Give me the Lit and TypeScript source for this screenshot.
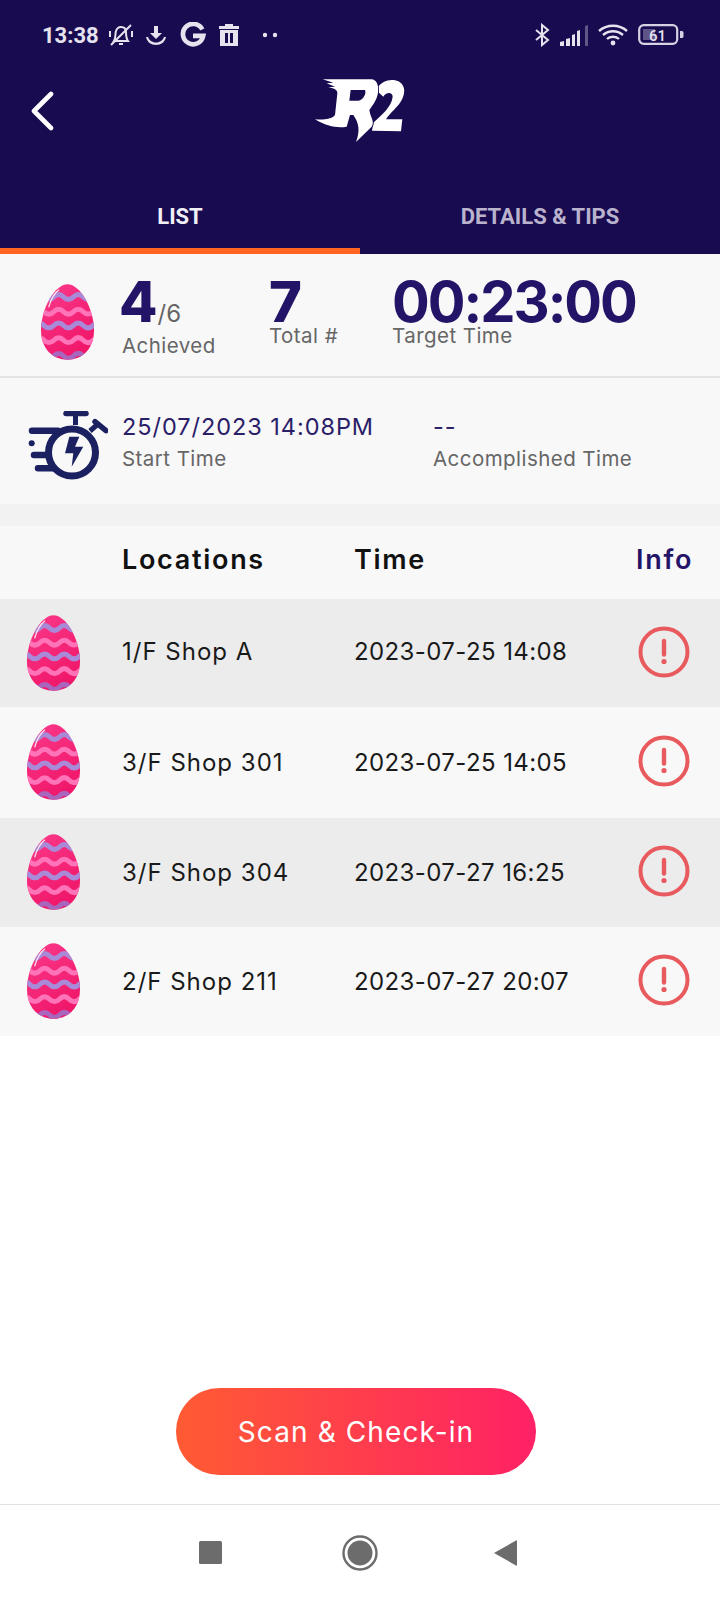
import { LitElement, css, html, svg } from "lit";
import { customElement } from "lit/decorators.js";

const rows = [
  { place: "1/F Shop A", time: "2023-07-25 14:08" },
  { place: "3/F Shop 301", time: "2023-07-25 14:05" },
  { place: "3/F Shop 304", time: "2023-07-27 16:25" },
  { place: "2/F Shop 211", time: "2023-07-27 20:07" },
];

const wave = (y: number, color: string, width = 5) => {
  let d = `M-6 ${y}`;
  for (let x = -6; x < 60; x += 20) {
    d += ` q5 -5 10 0 t10 0`;
  }
  return svg`<path d=${d} fill="none" stroke=${color} stroke-width=${width}/>`;
};

let eggId = 0;
const egg = () => {
  const id = `egg-${eggId++}`;
  const shape = "M28 1C41 1 55 26 55 48C55 67 43 78 28 78C13 78 1 67 1 48C1 26 15 1 28 1Z";
  return html`<svg class="egg" viewBox="0 0 56 79">
    <defs>
      <clipPath id=${id}><path d=${shape} /></clipPath>
      <linearGradient id="${id}-g" x1="0" y1="0" x2="0.5" y2="1">
        <stop offset="0" stop-color="#fb3a8a" />
        <stop offset="1" stop-color="#f0176a" />
      </linearGradient>
    </defs>
    <path d=${shape} fill="url(#${id}-g)" />
    <g clip-path="url(#${id})">
      ${wave(14, "#a88ad8")}${wave(29, "#ff74b8")}${wave(43, "#a88ad8")}${wave(58, "#ff74b8")}${wave(74, "#a866bc")}
    </g>
    <path d="M19 7C14 11 11 17 9 24" fill="none" stroke="#ffe0ee" stroke-width="1.3" stroke-linecap="round" />
  </svg>`;
};

const warn = html`<svg class="warn" viewBox="0 0 52 52">
  <circle cx="26" cy="26" r="23.5" fill="none" stroke="#e95a5e" stroke-width="4" />
  <path d="M26 15V28.5" stroke="#e95a5e" stroke-width="4.4" stroke-linecap="round" />
  <circle cx="26" cy="35.5" r="2.6" fill="#e95a5e" />
</svg>`;

@customElement("app-root")
export class AppRoot extends LitElement {
  static styles = css`
    :host {
      display: block;
      width: 720px;
      height: 1600px;
      background: #fff;
      font-family: Inter, "Liberation Sans", sans-serif;
      position: relative;
      overflow: hidden;
    }
    .header {
      background: #190b50;
      height: 254px;
      display: flex;
      flex-direction: column;
      color: #fff;
    }
    .status {
      height: 70px;
      padding: 0 36px 0 42px;
      display: flex;
      align-items: center;
      justify-content: space-between;
      color: #e6e3ef;
    }
    .status-left,
    .status-right {
      display: flex;
      align-items: center;
    }
    .clock {
      font: 700 22px Roboto, sans-serif;
      margin-right: 9px;
    }
    .status svg {
      display: block;
    }
    .toolbar {
      height: 74px;
      padding-left: 30px;
      display: flex;
      align-items: flex-start;
      position: relative;
    }
    .back {
      margin-top: 21px;
    }
    .logo {
      position: absolute;
      left: 300px;
      top: -10px;
    }
    .tabs {
      margin-top: auto;
      display: flex;
      height: 74px;
    }
    .tab {
      flex: 1;
      display: flex;
      align-items: center;
      justify-content: center;
      padding-top: 5px;
      box-sizing: border-box;
      border-bottom: 6px solid transparent;
      font: 700 22px Roboto, sans-serif;
      color: #b9b3cd;
    }
    .tab.on {
      color: #f2f0f7;
      border-bottom-color: #ff6622;
    }
    .summary {
      height: 124px;
      background: #f8f8f8;
      border-bottom: 2px solid #e4e4e4;
      box-sizing: border-box;
      display: flex;
      position: relative;
    }
    .summary .egg {
      width: 55px;
      height: 78px;
      margin: 29px 0 0 40px;
    }
    .stat {
      position: absolute;
      top: 0;
    }
    .big {
      font-size: 56px;
      font-weight: 800;
      color: #241468;
      line-height: 46px;
      margin-top: 25px;
      white-space: nowrap;
    }
    .big.clockface {
      font-weight: 700;
      letter-spacing: -2px;
    }
    .big small {
      font-size: 24px;
      font-weight: 400;
      color: #666;
      line-height: 0;
    }
    .sub {
      font-size: 20.5px;
      font-weight: 400;
      color: #666;
      white-space: nowrap;
      letter-spacing: 0.45px;
    }
    .stat .sub {
      margin-top: -2px;
    }
    .stat .sub.low {
      margin: 8px 0 0 3px;
    }
    .times {
      height: 126px;
      background: #f8f8f8;
      display: flex;
      align-items: flex-start;
      position: relative;
    }
    .times .clockicon {
      margin: 33px 0 0 28px;
    }
    .time-col {
      position: absolute;
      top: 34px;
    }
    .time-col .value {
      font-size: 23.5px;
      color: #2a2068;
      letter-spacing: 0.95px;
      white-space: nowrap;
    }
    .time-col .sub {
      margin-top: 5px;
    }
    .gap {
      height: 22px;
      background: #f2f2f2;
    }
    .table-head,
    .row {
      display: grid;
      grid-template-columns: 122px 232px 1fr 104px;
      align-items: center;
    }
    .table-head {
      height: 73px;
      box-sizing: border-box;
      padding-bottom: 7px;
      background: #f8f8f8;
      font-size: 27px;
      font-weight: 600;
      color: #111;
      letter-spacing: 1.7px;
    }
    .table-head .info {
      color: #241468;
      padding-left: 20px;
    }
    .row {
      height: 109px;
      background: #f8f8f8;
      font-size: 24px;
      color: #1a1a1a;
      letter-spacing: 0.4px;
    }
    .row:nth-child(odd) {
      background: #ececec;
    }
    .row:first-child {
      height: 108px;
    }
    .row:first-child span {
      margin-bottom: 4px;
    }
    .row:nth-child(2) {
      height: 111px;
    }
    .row .place {
      letter-spacing: 1px;
    }
    .row .egg {
      width: 55px;
      height: 78px;
      margin: 0 0 1px 26px;
    }
    .warn {
      width: 52px;
      height: 52px;
      margin: 0 0 3px 22px;
    }
    .scan {
      position: absolute;
      left: 176px;
      top: 1388px;
      width: 360px;
      height: 87px;
      border-radius: 44px;
      background: linear-gradient(90deg, #ff5b33, #ff2165);
      color: #fff;
      font-size: 28px;
      letter-spacing: 1.1px;
      display: flex;
      align-items: center;
      justify-content: center;
    }
    .nav {
      position: absolute;
      left: 0;
      right: 0;
      top: 1504px;
      height: 96px;
      box-sizing: border-box;
      padding-right: 4px;
      border-top: 1px solid #e2e2e2;
      display: flex;
      align-items: center;
      justify-content: center;
      gap: 118px;
    }
    .nav svg {
      display: block;
    }
    .nav .home {
      margin: 0 -2px 0 2px;
    }
  `;

  render() {
    return html`
      <div class="header">
        <div class="status">
          <div class="status-left">
            <span class="clock">13:38</span>
            <svg width="26" height="26" viewBox="0 0 26 26" fill="none" stroke="#e6e3ef" stroke-width="2" style="margin-right:10px">
              <path d="M6 19C8 16 7 12 8 9C9 6 11 5 13 5C16 5 18 7 18 10C18 13 18 16 20 19Z" />
              <path d="M11 22H15M3 23L23 3M2 9V15M24 9V15" />
            </svg>
            <svg width="24" height="24" viewBox="0 0 24 24" fill="#e6e3ef" style="margin-right:12px">
              <path d="M10 3H14V10H18L12 16L6 10H10Z" />
              <path d="M2 14C3 19 7 22 12 22C17 22 21 19 22 14H20C19 17 16 19.5 12 19.5C8 19.5 5 17 4 14Z" />
            </svg>
            <svg width="26" height="26" viewBox="0 0 28 28" fill="none" stroke="#e6e3ef" stroke-width="5" style="margin-right:12px">
              <path d="M24 8A11 11 0 1 0 25 15H14" />
            </svg>
            <svg width="22" height="24" viewBox="0 0 22 24" fill="#e6e3ef" style="margin-right:22px">
              <path d="M7 1H15V3H21V6H1V3H7Z" />
              <path fill-rule="evenodd" d="M2 7H20V23H2ZM7 10V20H10V10ZM12 10V20H15V10Z" />
            </svg>
            <svg width="16" height="6" viewBox="0 0 16 6" fill="#e6e3ef">
              <circle cx="3" cy="3" r="2.2" /><circle cx="13" cy="3" r="2.2" />
            </svg>
          </div>
          <div class="status-right">
            <svg width="16" height="24" viewBox="0 0 16 24" fill="none" stroke="#e6e3ef" stroke-width="2" style="margin-right:10px">
              <path d="M2 7L14 17L8 22V2L14 7L2 17" />
            </svg>
            <svg width="28" height="21" viewBox="0 0 28 21" fill="#e6e3ef" style="margin-right:10px">
              <path d="M0 21V17L4 16V21ZM6 21V14L10 13V21ZM12 21V10L15 9V21ZM17 21V6L20 5V21Z" />
              <path d="M25 1L28 0V21H25Z" opacity=".35" />
            </svg>
            <svg width="30" height="22" viewBox="0 0 30 22" fill="none" stroke="#e6e3ef" stroke-width="2.4" style="margin-right:10px">
              <path d="M1 7C9 0 21 0 29 7M5 11C11 6 19 6 25 11M9 15C12 12 18 12 21 15" />
              <circle cx="15" cy="19" r="2.4" fill="#e6e3ef" stroke="none" />
            </svg>
            <svg width="46" height="22" viewBox="0 0 46 22">
              <rect x="1.2" y="1.2" width="38" height="18.6" rx="4.5" fill="none" stroke="#d6d2e4" stroke-width="2.2" />
              <rect x="5" y="5" width="12" height="11" fill="#5e5488" />
              <path d="M42 7H44C45 7 45.5 8 45.5 9V12C45.5 13 45 14 44 14H42Z" fill="#d6d2e4" />
              <text x="19.5" y="16.5" text-anchor="middle" font-family="Roboto" font-size="15" font-weight="500" fill="#e6e3ef">61</text>
            </svg>
          </div>
        </div>
        <div class="toolbar">
          <svg class="back" width="26" height="40" viewBox="0 0 26 40" fill="none" stroke="#fff" stroke-width="4.6" stroke-linecap="round" stroke-linejoin="round">
            <path d="M21 3L4 20L21 37" />
          </svg>
          <svg class="logo" width="120" height="90" viewBox="0 0 360 270" fill="#fff">
            <path d="M228 90C240 65 265 58 280 60C310 62 322 90 305 120C295 140 270 158 258 178L307 178L303 214L216 212L220 188C245 165 275 140 278 110C278 95 258 95 250 110Z" />
            <path
              fill-rule="evenodd"
              stroke="#190b50"
              stroke-width="5"
              paint-order="stroke"
              d="M68 58L215 58C240 60 240 105 222 130L208 150C212 175 225 185 215 200L168 246C180 215 178 190 160 165L150 165L140 200C115 205 80 200 45 178C70 180 95 178 105 165L112 100C112 90 105 85 85 82L105 80L80 70L100 68ZM152 90L195 90C200 100 190 120 175 122L148 122Z"
            />
          </svg>
        </div>
        <div class="tabs">
          <div class="tab on">LIST</div>
          <div class="tab">DETAILS &amp; TIPS</div>
        </div>
      </div>

      <div class="summary">
        ${egg()}
        <div class="stat" style="left:119px">
          <div class="big">4<small>/6</small></div>
          <div class="sub low">Achieved</div>
        </div>
        <div class="stat" style="left:269px">
          <div class="big">7</div>
          <div class="sub">Total #</div>
        </div>
        <div class="stat" style="left:392px">
          <div class="big clockface">00:23:00</div>
          <div class="sub">Target Time</div>
        </div>
      </div>

      <div class="times">
        <svg class="clockicon" width="80" height="70" viewBox="0 0 80 70">
          <g fill="none" stroke="#1b2061">
            <circle cx="44" cy="41.5" r="23.5" stroke-width="7" />
            <path d="M47.5 4V14M62 20L70 13" stroke-width="5" />
            <path d="M67 10.7L78 19.7" stroke-width="5.5" stroke-linecap="round" />
            <path d="M38 2.5H58" stroke-width="5.5" stroke-linecap="round" />
            <path d="M4 19.7H30M6 44H20M10 57.3H26" stroke-width="6.5" stroke-linecap="round" />
          </g>
          <circle cx="3.7" cy="32.3" r="3" fill="#1b2061" />
          <path d="M41.3 25.7H51.3L47 35.7H55.3L43.7 55.7L45.3 42.3H37Z" fill="#1b2061" />
        </svg>
        <div class="time-col" style="left:122px">
          <div class="value">25/07/2023 14:08PM</div>
          <div class="sub">Start Time</div>
        </div>
        <div class="time-col" style="left:433px">
          <div class="value">--</div>
          <div class="sub">Accomplished Time</div>
        </div>
      </div>

      <div class="gap"></div>

      <div class="table-head">
        <span></span><span>Locations</span><span>Time</span><span class="info">Info</span>
      </div>
      <div>
        ${rows.map(
          (r) => html`<div class="row">
            ${egg()}
            <span class="place">${r.place}</span>
            <span>${r.time}</span>
            ${warn}
          </div>`
        )}
      </div>

      <div class="scan">Scan &amp; Check-in</div>

      <div class="nav">
        <svg width="23" height="23" viewBox="0 0 23 23"><rect width="23" height="23" rx="1.5" fill="#6c6c6c" /></svg>
        <svg class="home" width="36" height="36" viewBox="0 0 36 36">
          <circle cx="18" cy="18" r="16.5" fill="none" stroke="#6c6c6c" stroke-width="2.4" />
          <circle cx="18" cy="18" r="12.5" fill="#6c6c6c" />
        </svg>
        <svg width="23" height="26" viewBox="0 0 23 26"><path d="M0 13L22 0.5Q23 0 23 1V25Q23 26 22 25.5Z" fill="#6c6c6c" /></svg>
      </div>
    `;
  }
}
